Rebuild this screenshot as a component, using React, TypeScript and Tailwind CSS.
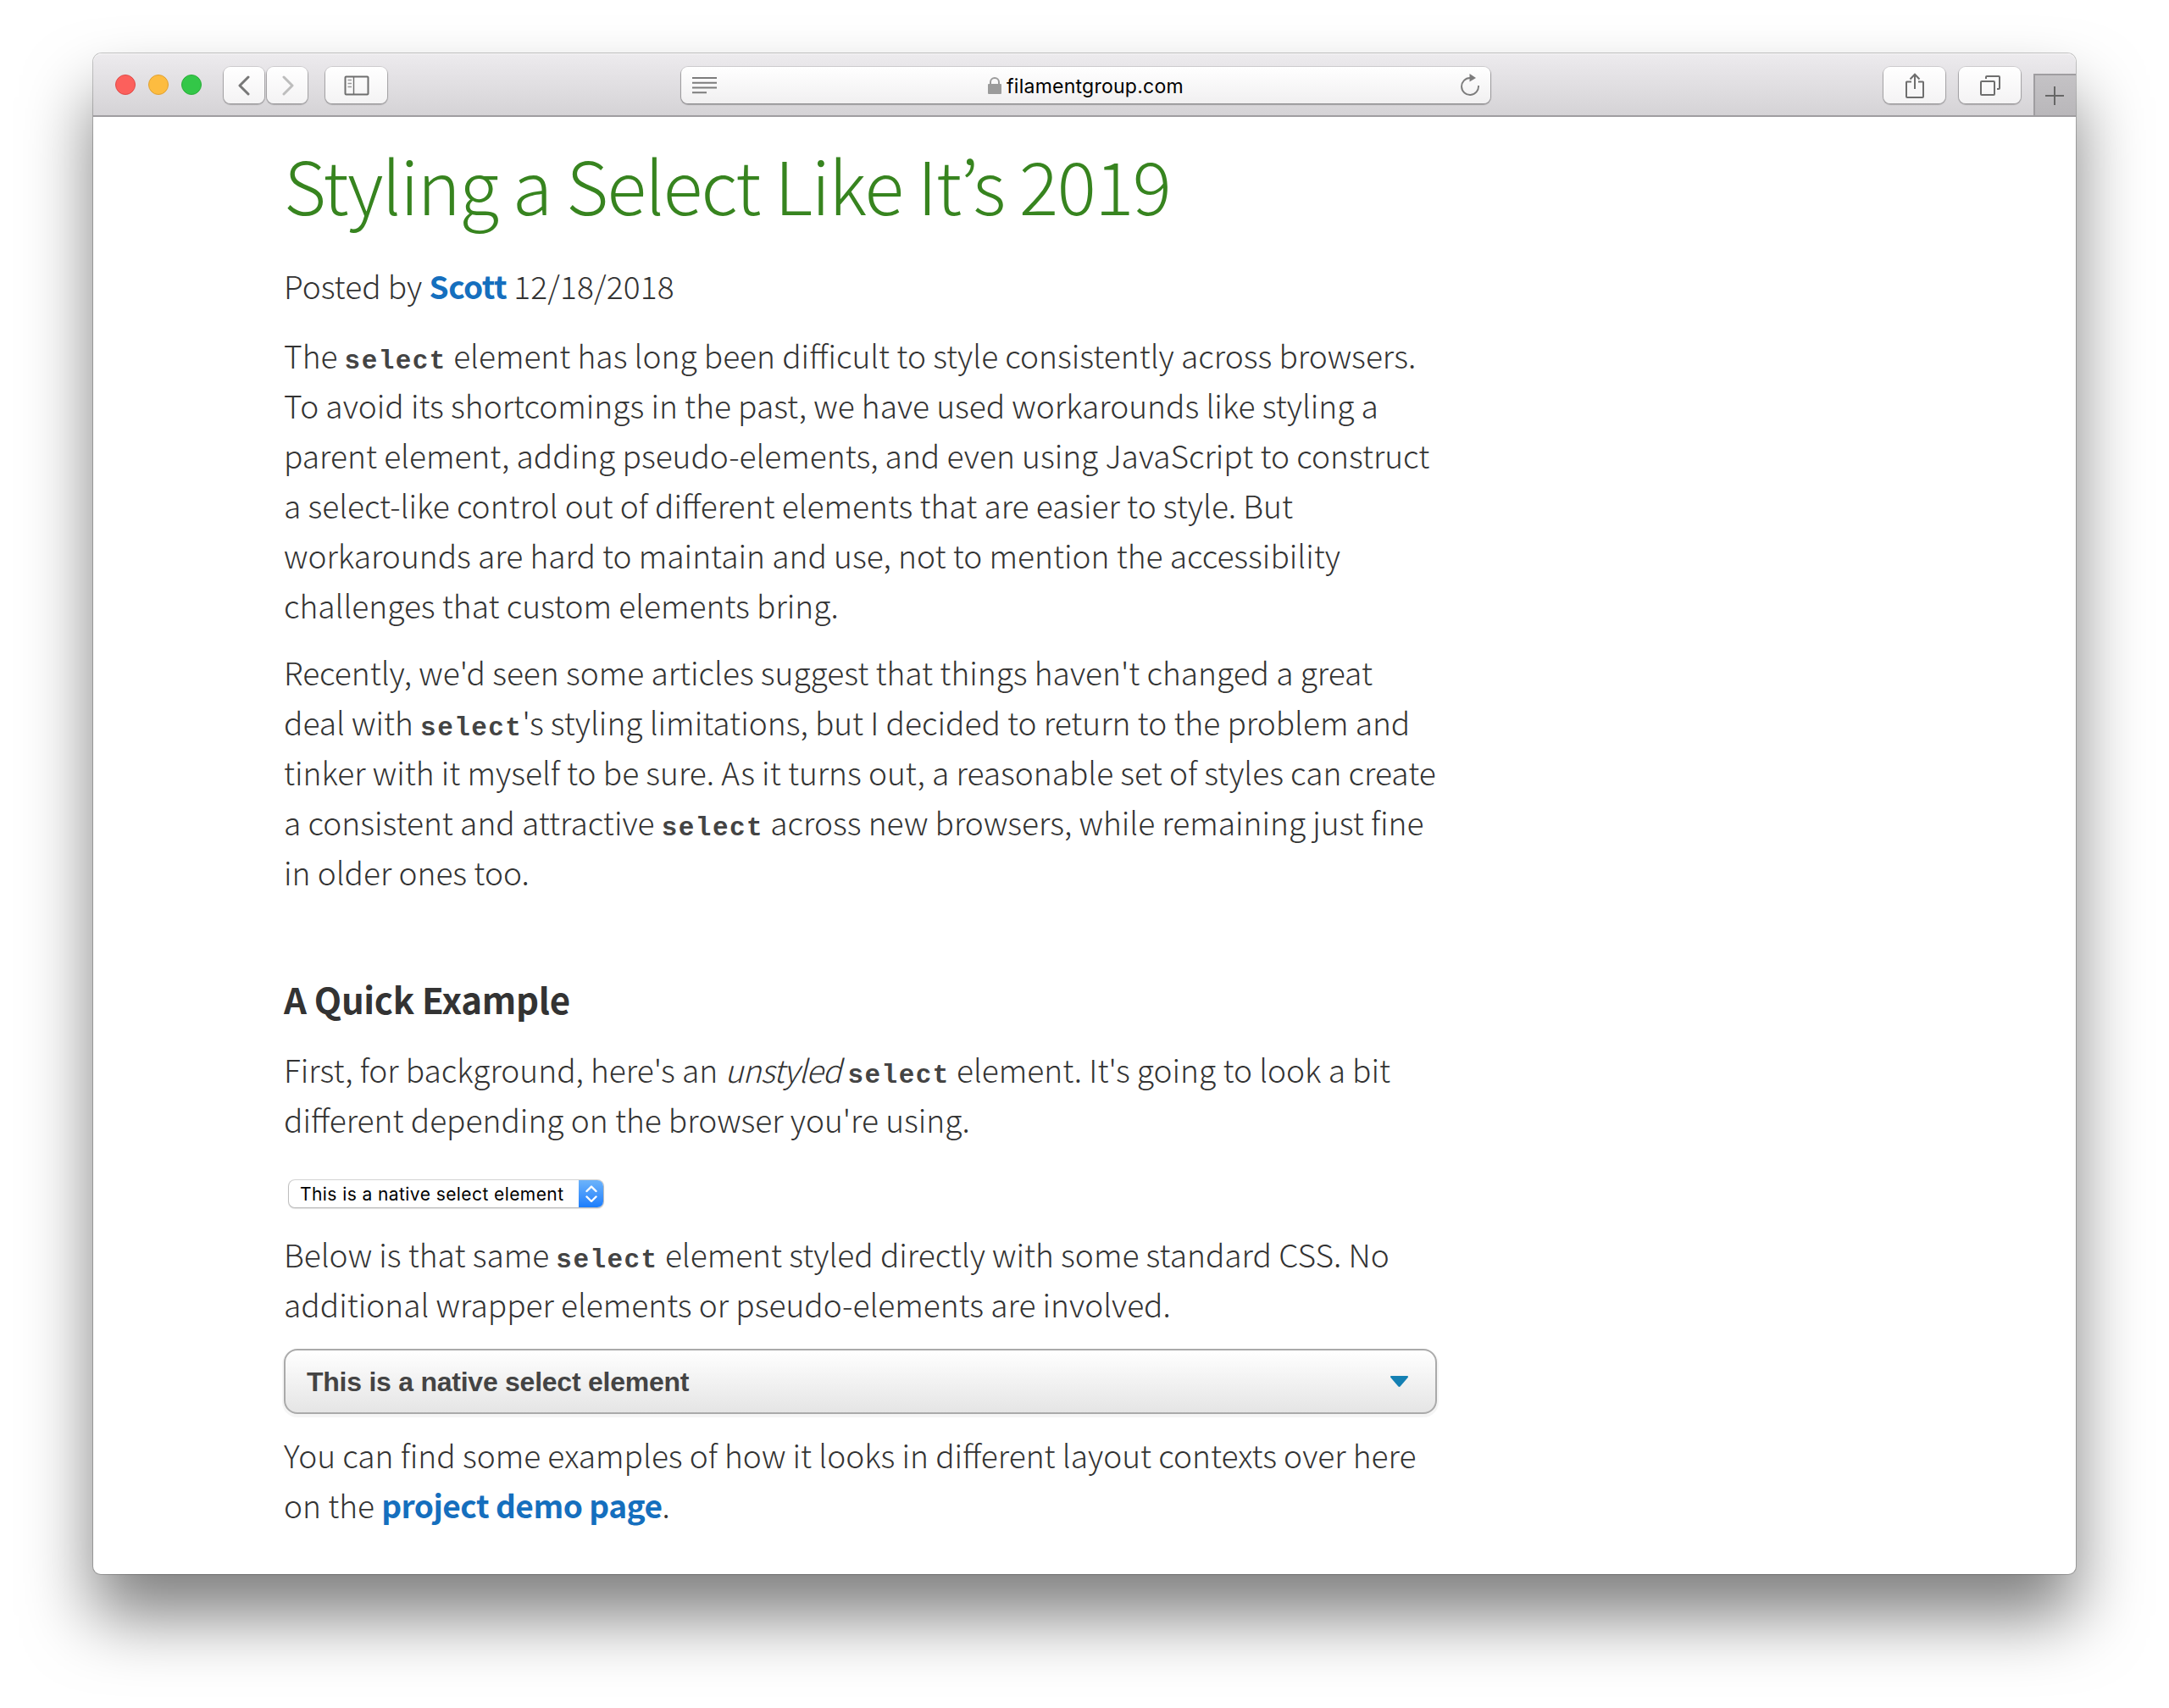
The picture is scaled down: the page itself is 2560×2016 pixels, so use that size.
import React from 'react'
import clsx from 'clsx'

const toolbarButton =
  'flex items-center justify-center h-[43px] rounded-[8px] bg-gradient-to-b from-white to-[#f4f3f4] shadow-[0_0_0_1px_rgba(0,0,0,0.09),0_1px_1px_1px_rgba(0,0,0,0.2)]'

function ToolbarButton({ className, children }: { className: string; children: React.ReactNode }) {
  return <div className={clsx(toolbarButton, className)}>{children}</div>
}

function Code({ children }: { children: React.ReactNode }) {
  return (
    <code className="font-['Liberation_Mono',monospace] font-bold text-[31px] leading-none tracking-[1.45px] text-[#444]">
      {children}
    </code>
  )
}

function TextLink({ children }: { children: React.ReactNode }) {
  return <a className="font-bold text-[#156fbe] tracking-[-0.5px]">{children}</a>
}

/* Safari window toolbar */
function Toolbar() {
  return (
    <header className="relative flex h-[75px] shrink-0 border-b-2 border-[#9f9da0] bg-gradient-to-b from-[#edebee] to-[#d5d3d6] rounded-t-[10px] shadow-[inset_0_1px_0_#f7f6f7]">
      {/* Window controls */}
      <div className="flex gap-[15px] pt-[25px] pl-[26px]">
        <span className="size-6 rounded-full bg-[#fc605c] border border-[#e04a47]" />
        <span className="size-6 rounded-full bg-[#fdbc40] border border-[#e0a132]" />
        <span className="size-6 rounded-full bg-[#33c748] border border-[#2aae39]" />
      </div>

      {/* Back / forward */}
      <div className="flex gap-[3px] mt-4 ml-[26px]">
        <ToolbarButton className="w-12">
          <svg className="w-6 h-6" viewBox="0 0 24 24" fill="none" stroke="#777" strokeWidth="3" strokeLinecap="round" strokeLinejoin="round">
            <path d="M17 2 7 12l10 10" />
          </svg>
        </ToolbarButton>
        <ToolbarButton className="w-12">
          <svg className="w-6 h-6" viewBox="0 0 24 24" fill="none" stroke="#bdbdbd" strokeWidth="3" strokeLinecap="round" strokeLinejoin="round">
            <path d="m8 2 10 10L8 22" />
          </svg>
        </ToolbarButton>
      </div>

      {/* Sidebar */}
      <ToolbarButton className="w-[73px] mt-4 ml-[21px]">
        <svg className="w-[30px] h-6" viewBox="0 0 30 24" fill="none" stroke="#6e6e6e">
          <rect x="1.5" y="1.5" width="27" height="21" rx="1" strokeWidth="2" />
          <path d="M11.5 1.5v21" strokeWidth="1.4" />
          <path d="M4.5 5.5H9M4.5 9.5H9M4.5 13.5H9" strokeWidth="1.6" stroke="#999" />
        </svg>
      </ToolbarButton>

      {/* Address bar */}
      <div className="relative flex items-center justify-center w-[955px] h-[43px] mt-4 ml-[347px] rounded-[8px] bg-gradient-to-b from-white to-[#f1f0f1] shadow-[0_0_0_1px_rgba(0,0,0,0.09),0_1px_1px_1px_rgba(0,0,0,0.25)]">
        <svg className="absolute left-[13px] top-[12px] w-[30px] h-[20px]" viewBox="0 0 30 20" fill="none" stroke="#7c7c7c" strokeWidth="2">
          <path d="M0 1h29M0 6.7h29M0 12.4h29M0 18.2h17" />
        </svg>
        <svg className="w-4 h-5 mr-[6px]" viewBox="0 0 16 20">
          <rect x="0" y="8" width="16" height="12" rx="1" fill="#9b9b9b" />
          <path d="M3 9V6a5 5 0 0 1 10 0v3" fill="none" stroke="#9b9b9b" strokeWidth="2" />
        </svg>
        <span className="pt-[3px] font-['Inter',sans-serif] text-[23px] leading-none tracking-[0.25px] text-black">filamentgroup.com</span>
        <svg className="absolute right-[12px] top-[8px] w-[24px] h-[26px]" viewBox="0 0 24 26">
          <path d="M12 5A10 10 0 1 0 22 14" fill="none" stroke="#7c7c7c" strokeWidth="1.9" />
          <path d="M11.5 0v9.5L19 5z" fill="#7c7c7c" />
        </svg>
      </div>

      {/* Share / tabs */}
      <ToolbarButton className="w-[73px] mt-4 ml-[464px]">
        <svg className="w-6 h-[30px]" viewBox="0 0 24 30" fill="none" stroke="#6e6e6e" strokeWidth="2">
          <path d="M8 10.5H2.5A.5.5 0 0 0 2 11v17a1 1 0 0 0 1 1h18a1 1 0 0 0 1-1V11a.5.5 0 0 0-.5-.5H16" />
          <path d="M12 19V2M6.5 7.5 12 1.8l5.5 5.7" />
        </svg>
      </ToolbarButton>
      <ToolbarButton className="w-[73px] mt-4 ml-4">
        <svg className="w-6 h-6" viewBox="0 0 24 24" fill="none" stroke="#6e6e6e" strokeWidth="2">
          <rect x="1" y="7" width="16" height="16" rx="1" />
          <path d="M7 4V2a1 1 0 0 1 1-1h14a1 1 0 0 1 1 1v13a1 1 0 0 1-1 1h-2" />
        </svg>
      </ToolbarButton>

      {/* New tab */}
      <div className="flex items-center justify-center w-[50px] h-[49px] mt-6 ml-auto pr-[2px] border-l-2 border-t-2 border-[#9f9da0] bg-gradient-to-b from-[#c4c2c5] to-[#b9b7ba]">
        <svg className="w-[22px] h-[22px]" viewBox="0 0 22 22" stroke="#666" strokeWidth="2">
          <path d="M11 0v22M0 11h22" />
        </svg>
      </div>
    </header>
  )
}

/* Small macOS popup button */
function NativeSelect() {
  return (
    <div className="flex items-stretch w-[371px] h-8 mt-[42px] ml-[6px] rounded-[7px] overflow-hidden bg-white shadow-[0_0_0_1px_rgba(0,0,0,0.16),0_1px_1px_1px_rgba(0,0,0,0.12)]">
      <span className="flex-1 pl-[13px] font-['Inter',sans-serif] font-normal text-[21px] leading-[33px] tracking-[0.42px] text-black">
        This is a native select element
      </span>
      <span className="flex items-center justify-center w-[29px] bg-gradient-to-b from-[#6cb3fa] to-[#1a7dfc]">
        <svg className="w-[14px] h-5" viewBox="0 0 14 20" fill="none" stroke="#fff" strokeWidth="2.4" strokeLinecap="round" strokeLinejoin="round">
          <path d="m1.5 7 5.5-5.5L12.5 7M1.5 13.5 7 19l5.5-5.5" />
        </svg>
      </span>
    </div>
  )
}

function StyledSelect() {
  return (
    <div className="flex items-center justify-between w-[1361px] h-[77px] mt-[23px] pl-[25px] pr-[32px] border-2 border-[#aaa] rounded-[16px] bg-gradient-to-b from-white to-[#e5e5e5] shadow-[0_2px_0_2px_rgba(0,0,0,0.04)]">
      <span className="font-['Liberation_Sans',sans-serif] font-bold text-[32px] leading-none tracking-[-0.25px] text-[#444]">
        This is a native select element
      </span>
      <svg className="w-[21px] h-[13px]" viewBox="0 0 21 13">
        <path d="M1.2 0h18.6c1.2 0 1.5 1.2.8 2L11.8 12.2a1.8 1.8 0 0 1-2.6 0L.4 2C-.3 1.2 0 0 1.2 0z" fill="#1480b3" />
      </svg>
    </div>
  )
}

export default function App() {
  return (
    <div className="w-[2560px] h-[2016px] overflow-hidden bg-white pt-[63px] pl-[110px]">
      <div className="flex flex-col w-[2340px] h-[1795px] rounded-t-[10px] rounded-b-[9px] bg-white shadow-[0_0_0_1px_rgba(0,0,0,0.22),0_50px_80px_rgba(0,0,0,0.5)]">
        <Toolbar />

        <article className="pt-[29px] pl-[225px] font-['Noto_Sans_CJK_KR',sans-serif] font-light text-[37.1px] leading-[59px] text-[#333] whitespace-nowrap">
          <h1 className="text-[86px] leading-[100px] tracking-[-1.48px] text-[#37841f]">Styling a Select Like It’s 2019</h1>

          <p className="mt-[41px]">
            Posted by <TextLink>Scott</TextLink> <span className="tracking-[0.15px]">12/18/2018</span>
          </p>

          <p className="mt-[23px]">
            The <Code>select</Code> element has long been difficult to style consistently across browsers.<br />
            To avoid its shortcomings in the past, we have used workarounds like styling a<br />
            parent element, adding pseudo-elements, and even using JavaScript to construct<br />
            a select-like control out of different elements that are easier to style. But<br />
            workarounds are hard to maintain and use, not to mention the accessibility<br />
            challenges that custom elements bring.
          </p>

          <p className="mt-5">
            Recently, we'd seen some articles suggest that things haven't changed a great<br />
            deal with <Code>select</Code>'s styling limitations, but I decided to return to the problem and<br />
            tinker with it myself to be sure. As it turns out, a reasonable set of styles can create<br />
            a consistent and attractive <Code>select</Code> across new browsers, while remaining just fine<br />
            in older ones too.
          </p>

          <h2 className="mt-[90px] font-bold text-[42px] tracking-[-0.3px]">A Quick Example</h2>

          <p className="mt-[25px]">
            First, for background, here's an <em className="tracking-[-0.8px]">unstyled</em> <Code>select</Code> element. It's going to look a bit<br />
            different depending on the browser you're using.
          </p>

          <NativeSelect />

          <p className="mt-[26px]">
            Below is that same <Code>select</Code> element styled directly with some standard CSS. No<br />
            additional wrapper elements or pseudo-elements are involved.
          </p>

          <StyledSelect />

          <p className="mt-[19px]">
            You can find some examples of how it looks in different layout contexts over here<br />
            on the <TextLink>project demo page</TextLink>.
          </p>
        </article>
      </div>
    </div>
  )
}
